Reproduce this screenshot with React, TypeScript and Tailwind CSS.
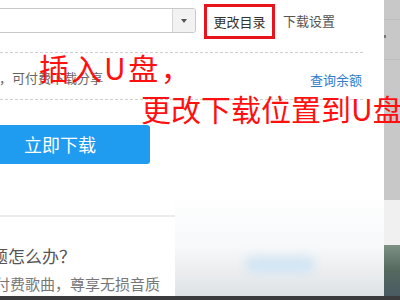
import React from "react";

const FONT = { fontFamily: '"Microsoft YaHei", "Noto Sans CJK SC", "Noto Sans", sans-serif' };

export default function App() {
  return (
    <div className="relative w-[400px] h-[300px] overflow-hidden bg-white" style={FONT}>
      {/* Top: download settings panel */}
      <div className="flex h-[200px]">
        <div className="w-[384px] flex flex-col">
          {/* Directory row */}
          <div className="flex items-start h-[44px]">
            <div className="-ml-[10px] w-[206px] h-[25px] mt-[8px] flex border border-[#c9c9c9] rounded-[3px] bg-white">
              <div className="flex-1" />
              <div className="w-[23px] h-full flex items-center justify-center bg-[#f2f2f2] border-l border-[#d6d6d6] rounded-r-[3px]">
                <div className="w-0 h-0 border-l-[3px] border-r-[3px] border-t-[4px] border-l-transparent border-r-transparent border-t-[#555]" />
              </div>
            </div>
            <button className="ml-[8px] mt-[4px] w-[71px] h-[35px] border-[3px] border-[#e8141b] bg-white text-[13px] text-[#333] flex items-center justify-center">
              更改目录
            </button>
            <span className="ml-[8px] mt-[12px] text-[13px] text-[#555] leading-[18px]">下载设置</span>
          </div>

          <div className="mt-[8px] w-[363px] border-t border-dashed border-[#cfcfcf]" />

          {/* Balance row */}
          <div className="h-[46px] flex items-center justify-between w-[362px] pt-[4px]">
            <span className="text-[13px] text-[#666] -ml-[1px]">，可付费下载分享</span>
            <a className="text-[13px] text-[#2f7ccf] mt-[4px]">查询余额</a>
          </div>

          <div className="w-[363px] border-t border-dashed border-[#cfcfcf]" />

          <button className="-ml-[30px] mt-[25px] w-[180px] h-[39px] rounded-[3px] bg-[#1f9bf0] text-white text-[18px] flex items-center justify-center">
            立即下载
          </button>
        </div>
        <div className="flex-1 bg-[#c8c8c8] flex flex-col">
          <div className="h-[20px] border-b border-[#bfbfbf]" />
          <div className="h-[17px]">
            <div className="w-[2px] h-[3px] bg-[#777] mt-[15px]" />
          </div>
          <div className="h-[23px] border-b border-[#bfbfbf]" />
          <div className="h-[40px] border-b border-[#bfbfbf]" />
        </div>
      </div>

      {/* Bottom: FAQ + blurred backdrop */}
      <div className="flex h-[96px]">
        <div className="w-[175px] bg-white flex flex-col">
          <div className="mt-[15px] h-[2px] bg-[#ececec]" />
          <div className="mt-[27px] -ml-[9px] text-[17px] leading-[24px] text-[#555] whitespace-nowrap">题怎么办？</div>
          <div className="mt-[6px] -ml-[5px] text-[15px] leading-[20px] text-[#777] whitespace-nowrap">付费歌曲，尊享无损音质</div>
        </div>
        <div className="flex-1 bg-gradient-to-b from-[#fefefe] via-[#f6f8fa] to-[#dfe2e4] flex">
          <div className="flex-1 flex items-end justify-center pb-[22px]">
            <div className="w-[70px] h-[18px] rounded-full bg-[#d4e6f4] blur-[4px]" />
          </div>
          <div className="w-[16px] flex flex-col">
            <div className="h-[45px] bg-[#f0f0f0]" />
            <div className="flex-1 bg-gradient-to-b from-[#7d9185] via-[#55695f] to-[#4a5a63]" />
          </div>
        </div>
      </div>
      <div className="h-[4px] bg-[#3b3b3d]" />

      {/* Red annotations drawn on the screenshot */}
      <div className="absolute left-[39px] top-[47px] text-[30px] leading-[40px] tracking-[2.5px] text-[#ff1010] whitespace-nowrap">插入U盘，</div>
      <div className="absolute left-[141px] top-[88px] text-[30px] leading-[40px] text-[#ff1010] whitespace-nowrap">更改下载位置到U盘</div>
    </div>
  );
}
